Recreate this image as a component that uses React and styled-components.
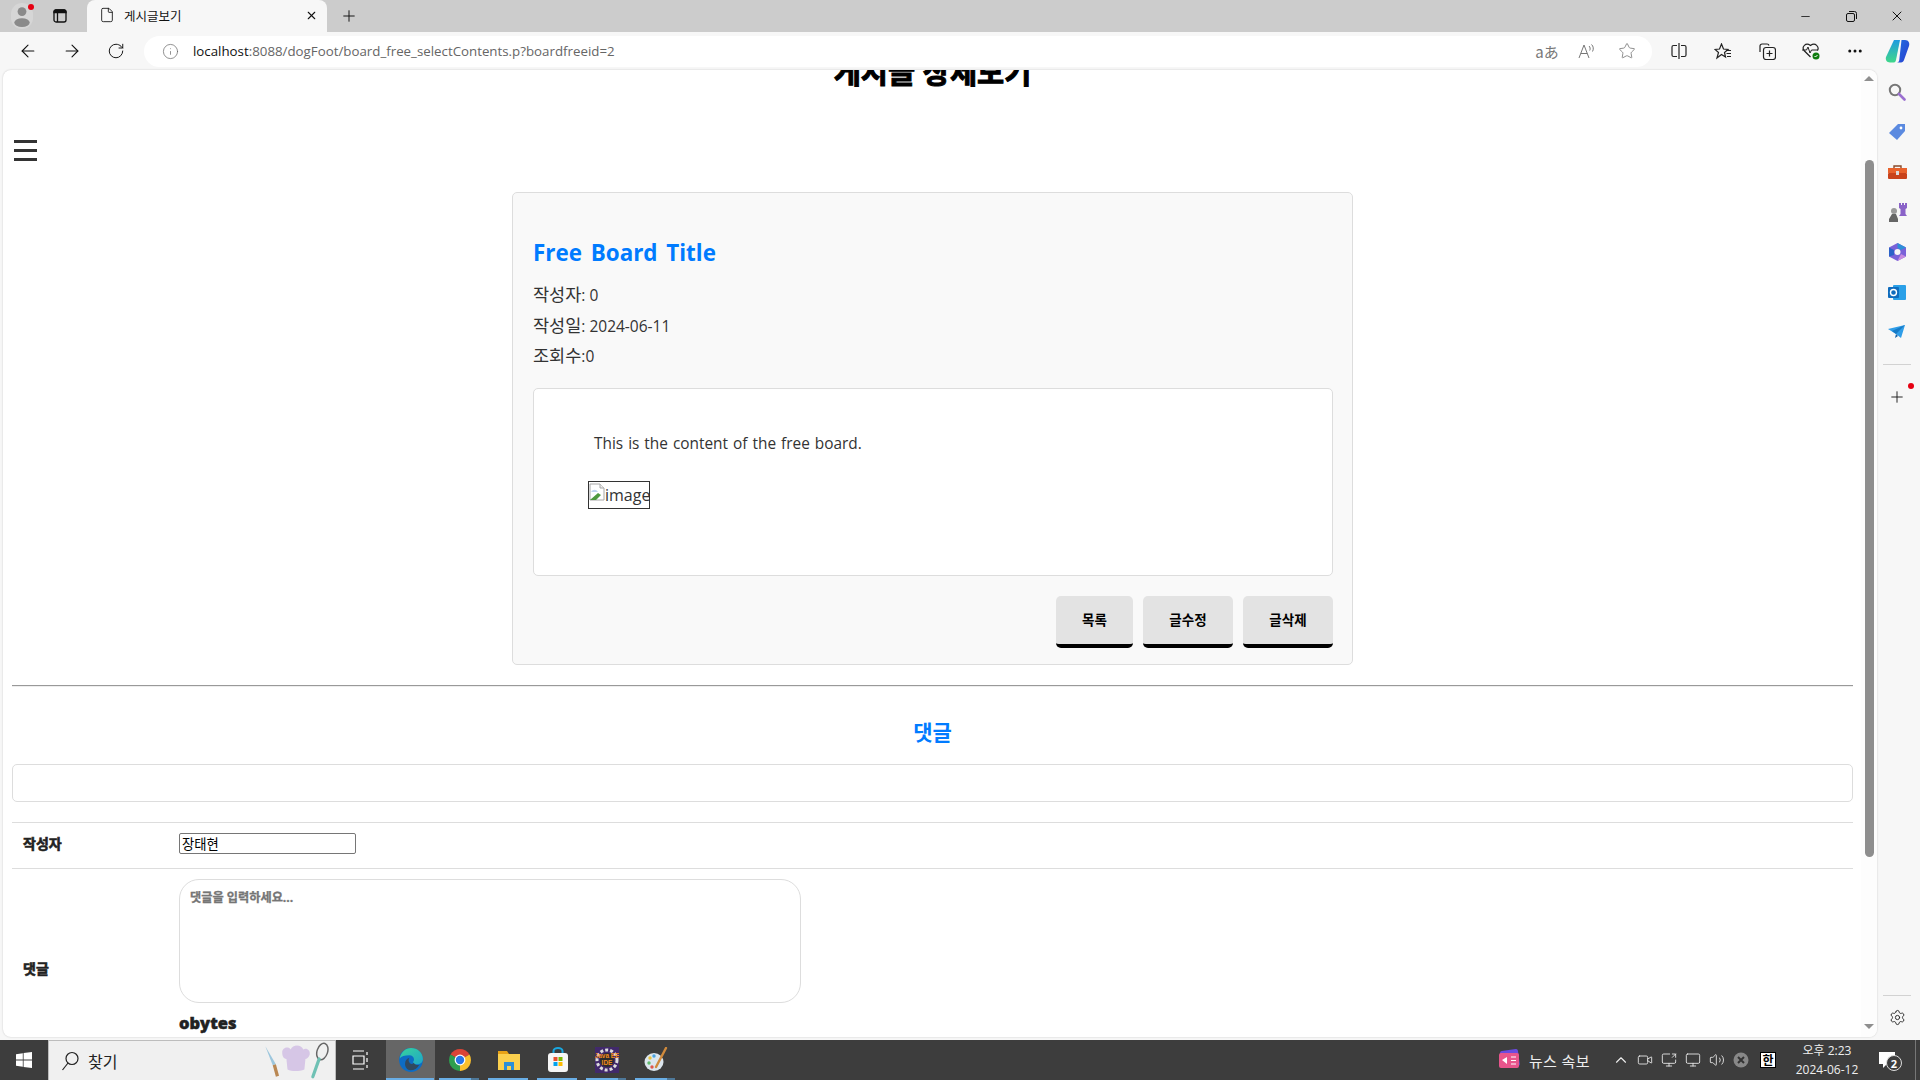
import styled, { createGlobalStyle } from "styled-components";
import {
  ArrowLeft,
  ArrowRight,
  RotateCw,
  Info,
  Star,
  Plus,
  X,
  Minus,
  File,
  Ellipsis,
  Settings,
  ChevronUp,
  Volume2,
  Video,
  ScreenShare,
  Monitor,
} from "lucide-react";

const KR = `"Open Sans", "Noto Sans CJK KR", sans-serif`;

const GlobalStyle = createGlobalStyle`
  html, body {
    margin: 0;
    height: 100%;
    overflow: hidden;
    background: #f7f7f7;
  }
  * {
    box-sizing: border-box;
  }
`;

const Browser = styled.div`
  width: 1920px;
  height: 1080px;
  display: flex;
  flex-direction: column;
  font-family: ${KR};
  color: #222;
`;

const TitleBar = styled.div`
  height: 32px;
  display: flex;
  align-items: stretch;
  background: #cccccc;
`;
const Slot = styled.div`
  position: relative;
  flex: none;
  width: ${(p) => p.$w || 44}px;
  display: flex;
  align-items: center;
  justify-content: center;
  color: ${(p) => p.$color || "#111"};
`;
const Tab = styled.div`
  width: 240px;
  margin-left: 11px;
  display: flex;
  align-items: center;
  padding: 0 1px 2px 12px;
  background: #f7f7f7;
  border-radius: 8px 8px 0 0;
  font-size: 12.5px;
  color: #111;
`;
const TabTitle = styled.span`
  margin-left: 9px;
  flex: 1;
`;
const WindowControls = styled.div`
  margin-left: auto;
  display: flex;
`;
const Avatar = styled.div`
  width: 22px;
  height: 26px;
  border-radius: 11px;
  background: #d6d6d6;
  display: flex;
  align-items: center;
  justify-content: center;
`;
const RedDot = styled.span`
  position: absolute;
  top: ${(p) => p.$top}px;
  left: ${(p) => p.$left}px;
  width: 6px;
  height: 6px;
  border-radius: 50%;
  background: #e60012;
`;

const ToolBar = styled.div`
  height: 38px;
  display: flex;
  align-items: center;
  padding: 0 3px 0 6px;
  background: #f7f7f7;
`;
const AddressBar = styled.div`
  flex: 1;
  height: 31px;
  margin: 0 5px 0 6px;
  padding: 0 5px 0 14px;
  display: flex;
  align-items: center;
  background: #fff;
  border-radius: 16px;
  font-size: 13.3px;
  color: #666;
  font-family: "Open Sans", sans-serif;
`;
const UrlText = styled.span`
  margin-left: 11px;
  flex: 1;
  b {
    font-weight: 400;
    color: #111;
  }
`;
const ReadModeGlyph = styled.span`
  font-size: 15px;
  color: #777;
  font-family: "Noto Sans CJK JP", sans-serif;
`;

const Main = styled.div`
  height: 970px;
  display: flex;
`;
const Viewport = styled.div`
  flex: 1;
  margin: 0 0 3px 3px;
  display: flex;
  overflow: hidden;
  background: #fff;
  border-radius: 8px;
  box-shadow: 0 0 2px rgba(0, 0, 0, 0.2);
`;
const Page = styled.div`
  flex: 1;
  min-width: 0;
  padding: 0 8px 0 9px;
  overflow: hidden;
`;
const PageTitle = styled.h1`
  margin: -18px 0 0;
  height: 40px;
  line-height: 40px;
  text-align: center;
  font-size: 29.5px;
  font-weight: 700;
  color: #000;
  -webkit-text-stroke: 1px #000;
`;
const Hamburger = styled.div`
  margin: 48px 0 0 2px;
  width: 23px;
  height: 21px;
  display: flex;
  flex-direction: column;
  justify-content: space-between;
`;
const HamburgerBar = styled.span`
  height: 3px;
  background: #333;
`;

const Card = styled.section`
  width: 841px;
  height: 473px;
  margin: 31px auto 0;
  padding: 42px 19px 16px 20px;
  background: #f9f9f9;
  border: 1px solid #ddd;
  border-radius: 5px;
`;
const CardTitle = styled.h2`
  margin: 0 0 9px;
  font-size: 22.4px;
  line-height: 36px;
  font-weight: 700;
  color: #007bff;
  word-spacing: 3px;
`;
const Meta = styled.p`
  margin: 0;
  height: 30.5px;
  line-height: 30px;
  font-size: 15.5px;
  color: #333;
`;
const MetaKey = styled.span`
  font-size: 17.5px;
  line-height: 1;
  font-weight: 400;
`;
const ContentBox = styled.div`
  height: 188px;
  margin-top: 16px;
  padding: 43px 54px 0;
  background: #fff;
  border: 1px solid #ddd;
  border-radius: 5px;
`;
const ContentText = styled.p`
  margin: 0;
  padding-left: 6px;
  line-height: 24px;
  font-size: 15.4px;
  color: #333;
  word-spacing: 1px;
`;
const BrokenImage = styled.div`
  width: 62px;
  height: 28px;
  margin-top: 25px;
  display: flex;
  align-items: center;
  overflow: hidden;
  border: 1px solid #333;
  font-size: 16px;
  color: #333;
  white-space: nowrap;
  svg {
    flex: none;
    align-self: flex-start;
    margin-top: 1px;
  }
`;
const ButtonRow = styled.div`
  margin-top: 20px;
  display: flex;
  justify-content: flex-end;
  gap: 10px;
`;
const Button = styled.button`
  width: ${(p) => p.$w}px;
  height: 52px;
  padding: 0 0 1px;
  background: #e3e3e3;
  border: 0;
  border-bottom: 4px solid #000;
  border-radius: 5px;
  font-family: ${KR};
  font-size: 13.5px;
  font-weight: 700;
  color: #000;
`;

const Divider = styled.hr`
  margin: 20px 0 0;
  height: 2px;
  border: 0;
  border-top: 1px solid #999;
  border-bottom: 1px solid #eee;
`;
const ReplyHeading = styled.h3`
  margin: 30px 0 0;
  line-height: 30px;
  text-align: center;
  font-size: 21px;
  font-weight: 700;
  color: #007bff;
`;
const ReplyList = styled.div`
  height: 38px;
  margin-top: 17px;
  border: 1px solid #ddd;
  border-radius: 5px;
`;
const FormRow = styled.div`
  display: grid;
  grid-template-columns: 167px 1fr;
  margin-top: ${(p) => p.$mt || 0}px;
  min-height: ${(p) => p.$h}px;
  padding: 10px 0 0;
  border-top: 1px solid #ddd;
`;
const FormLabel = styled.label`
  padding-left: 11px;
  align-self: ${(p) => p.$align || "start"};
  line-height: 21px;
  font-size: 14px;
  font-weight: 700;
  color: #222;
  -webkit-text-stroke: 0.6px #222;
`;
const WriterInput = styled.input`
  display: block;
  width: 177px;
  height: 21px;
  padding: 1px 2px;
  border: 1px solid #767676;
  border-radius: 2px;
  font-family: ${KR};
  font-size: 13.33px;
  color: #000;
  background: #fff;
`;
const ReplyArea = styled.textarea`
  display: block;
  width: 622px;
  height: 124px;
  padding: 10px;
  border: 1px solid #ddd;
  border-radius: 20px;
  resize: none;
  font-family: ${KR};
  font-size: 12.2px;
  font-weight: 700;
  line-height: 16px;
  &::placeholder {
    color: #757575;
    opacity: 1;
    -webkit-text-stroke: 0.3px #757575;
  }
`;
const UserName = styled.div`
  margin-top: 10px;
  line-height: 20px;
  font-size: 16.5px;
  font-weight: 800;
  color: #222;
  -webkit-text-stroke: 0.5px #222;
`;

const ScrollRail = styled.div`
  flex: none;
  width: 16px;
  padding: 6px 0 8px;
  display: flex;
  flex-direction: column;
  align-items: center;
  background: #fdfdfd;
`;
const ScrollArrow = styled.span`
  width: 0;
  height: 0;
  border-left: 5px solid transparent;
  border-right: 5px solid transparent;
  ${(p) =>
    p.$down
      ? "border-top: 5px solid #8e8e8e; margin-top: auto;"
      : "border-bottom: 5px solid #8e8e8e;"}
`;
const ScrollThumb = styled.span`
  width: 9px;
  height: 697px;
  margin-top: 79px;
  border-radius: 5px;
  background: #8e8e8e;
`;

const SideBar = styled.aside`
  flex: none;
  width: 43px;
  padding: 2px 3px 3px 0;
  display: flex;
  flex-direction: column;
  align-items: center;
`;
const SideItem = styled.div`
  position: relative;
  height: 40px;
  width: 40px;
  margin-top: ${(p) => p.$mt || 0}px;
  display: flex;
  align-items: center;
  justify-content: center;
  flex: none;
  color: #222;
`;
const SideRule = styled.div`
  width: 28px;
  height: 1px;
  margin: ${(p) => p.$margin};
  background: #d2d2d2;
  flex: none;
`;

const TaskBar = styled.footer`
  height: 40px;
  display: flex;
  align-items: stretch;
  background: #3d3d3d;
  color: #fff;
`;
const StartButton = styled.div`
  width: 48px;
  display: flex;
  align-items: center;
  justify-content: center;
`;
const SearchBox = styled.div`
  width: 288px;
  display: flex;
  align-items: center;
  padding: 0 4px 0 12px;
  background: #f0f0f0;
  border: 1px solid #bdbdbd;
  border-bottom: 0;
  color: #222;
  font-size: 16px;
`;
const SearchText = styled.span`
  margin-left: 9px;
  flex: 1;
`;
const TaskView = styled.div`
  width: 50px;
  display: flex;
  align-items: center;
  justify-content: center;
`;
const TaskApp = styled.div`
  position: relative;
  flex: none;
  width: 49px;
  display: flex;
  align-items: center;
  justify-content: center;
  background: ${(p) => (p.$active ? "#666666" : "transparent")};
  &::after {
    content: "";
    position: absolute;
    left: ${(p) => (p.$active ? 0 : 4)}px;
    right: ${(p) => (p.$active ? 1 : 5)}px;
    bottom: 0;
    height: 2px;
    background: ${(p) =>
      p.$stacked
        ? "linear-gradient(90deg, #69aee6 80%, #4e7899 80%)"
        : "#69aee6"};
  }
`;
const Tray = styled.div`
  margin-left: auto;
  display: flex;
  align-items: stretch;
`;
const NewsLabel = styled.span`
  align-self: center;
  margin: 0 19px 0 9px;
  font-size: 15px;
  letter-spacing: 0.4px;
  color: #eee;
`;
const TrayIcon = styled.div`
  width: ${(p) => p.$w || 24}px;
  display: flex;
  align-items: center;
  justify-content: center;
  color: #eee;
`;
const ImeBadge = styled.span`
  width: 16px;
  height: 16px;
  display: flex;
  align-items: center;
  justify-content: center;
  background: #fff;
  border: 1px solid #000;
  color: #000;
  font-size: 12px;
  font-weight: 700;
`;
const Clock = styled.div`
  width: 88px;
  display: flex;
  flex-direction: column;
  align-items: center;
  justify-content: center;
  gap: 1px;
  font-size: 12px;
  line-height: 18px;
  color: #eee;
`;
const NotifyButton = styled.div`
  position: relative;
  width: 34px;
  display: flex;
  align-items: center;
  justify-content: center;
`;
const NotifyCount = styled.span`
  position: absolute;
  left: 15px;
  top: 15px;
  width: 16px;
  height: 16px;
  display: flex;
  align-items: center;
  justify-content: center;
  border: 1px solid #ddd;
  border-radius: 50%;
  background: #3d3d3d;
  font-size: 11px;
  font-weight: 700;
  color: #fff;
`;
const ShowDesktop = styled.div`
  width: 5px;
  margin-left: 10px;
  border-left: 1px solid #777;
`;

const line = { strokeWidth: 1.5 };

const TabActions = () => (
  <svg width="14" height="14" viewBox="0 0 14 14" fill="none" stroke="#111" strokeWidth="1.300">
    <rect x="1" y="1" width="12" height="12" rx="2" />
    <path d="M1 3.500h12V3a2 2 0 0 0-2-2H3a2 2 0 0 0-2 2z" fill="#111" />
    <path d="M4.500 3.500V13" />
  </svg>
);
const Restore = () => (
  <svg width="11" height="11" viewBox="0 0 11 11" fill="none" stroke="#111">
    <rect x="0.500" y="2.500" width="8" height="8" rx="1.500" />
    <path d="M3 .5h5.500a2 2 0 0 1 2 2V8" />
  </svg>
);
const SplitScreen = () => (
  <svg width="16" height="16" viewBox="0 0 16 16" fill="none" stroke="#222" strokeWidth="1.200">
    <path d="M6 2.500H2.500a1.500 1.500 0 0 0-1.500 1.500v8a1.500 1.500 0 0 0 1.500 1.500H6M10 2.500h3.500A1.500 1.500 0 0 1 15 4v8a1.500 1.500 0 0 1-1.500 1.500H10M8 0v16" />
  </svg>
);
const Favorites = () => (
  <svg width="18" height="17" viewBox="0 0 18 17" fill="none" stroke="#222" strokeWidth="1.200">
    <path d="M7.500 1 9.500 6 14 6.400 10.500 9.500 11.500 14 7.500 11.500 3 15 4.500 9.500 1 6.400 5.500 6z" />
    <path d="M12 7.500h5M12.500 10.500h4.500M13 13.500h4" />
  </svg>
);
const Collections = () => (
  <svg width="17" height="17" viewBox="0 0 17 17" fill="none" stroke="#222" strokeWidth="1.200">
    <path d="M1 9V3a2 2 0 0 1 2-2h5a2 2 0 0 1 2 1.500" />
    <rect x="4.500" y="4.500" width="12" height="12" rx="2.500" />
    <path d="M10.500 7.500v6M7.500 10.500h6" />
  </svg>
);
const BrowserHealth = () => (
  <svg width="18" height="18" viewBox="0 0 18 18" fill="none">
    <path d="M8.500 15 2 8.500C-.5 5 3.500 0 8.500 3.500 13.500 0 17.500 5 15.500 8.500" stroke="#222" strokeWidth="1.200" />
    <path d="M0 8h4.500l1.500-3 2 6 1.500-3H16" stroke="#222" strokeWidth="1" />
    <circle cx="14" cy="14" r="3.500" fill="#107c10" />
    <path d="M12.500 14l1 1 2-2" stroke="#fff" />
  </svg>
);
const SideSearch = () => (
  <svg width="18" height="18" viewBox="0 0 18 18" fill="none">
    <circle cx="7" cy="7" r="5.200" stroke="#777" strokeWidth="2" />
    <path d="M11 11 16.500 16.500" stroke="#9b6fd0" strokeWidth="2.600" strokeLinecap="round" />
  </svg>
);
const TaskSearch = () => (
  <svg width="18" height="20" viewBox="0 0 18 20" fill="none" stroke="#222" strokeWidth="1.200">
    <circle cx="11" cy="7.500" r="6" />
    <path d="M7 12 1.500 19" />
  </svg>
);
const WinLogo = () => (
  <svg width="16" height="16" viewBox="0 0 16 16" fill="#fff">
    <path d="M0 2.200 6.800 1.200V7.600H0zM7.600 1.100 16 0V7.600H7.600zM0 8.400H6.800V14.800L0 13.800zM7.600 8.400H16V16L7.600 14.900z" />
  </svg>
);
const Chrome = () => (
  <svg width="24" height="24" viewBox="0 0 24 24">
    <path d="M12 12 2.500 6.500A11 11 0 0 1 21.500 6.500z" fill="#db4437" />
    <path d="M12 12 21.500 6.500A11 11 0 0 1 12 23z" fill="#fbc02d" />
    <path d="M12 12V23A11 11 0 0 1 2.500 6.500z" fill="#2e9e4f" />
    <circle cx="12" cy="12" r="5.400" fill="#fff" />
    <circle cx="12" cy="12" r="4.200" fill="#2a75e8" />
  </svg>
);
const Edge = ({ id }) => (
  <svg width="26" height="26" viewBox="0 0 24 24">
    <defs>
      <linearGradient id={id} x1="0" y1="0" x2="1" y2="1">
        <stop offset="0" stopColor="#38d39a" />
        <stop offset="1" stopColor="#1fa6c9" />
      </linearGradient>
    </defs>
    <circle cx="12" cy="12" r="11" fill="#0d6cc4" />
    <path
      d="M1.500 10.500C3 4.500 7 1 12 1c6 0 11 4.500 11 10 0 3-2.500 5-5.500 5-2 0-3.500-.7-3.500-2 0-.8.8-1.200.8-2.500C14.800 9 13 7.500 10.500 7.500 6 7.500 3 8.500 1.500 10.500z"
      fill={`url(#${id})`}
    />
    <path
      d="M14.500 14.500c1 2 3 2.500 5 2-1.500 3-4.500 5-8 5-3 0-5-3-5-6 0-3 2-5 4-5.500-1 1.500-1 3.500.5 5 1 .9 2.500 1 3.500-.5z"
      fill="#3d3d3d"
      opacity="0.75"
    />
  </svg>
);
const Explorer = () => (
  <svg width="24" height="24" viewBox="0 0 24 24">
    <path d="M1 3h9l2 3H1z" fill="#e8a317" />
    <rect x="1" y="6" width="22" height="16" fill="#fbd04e" />
    <path d="M7 22v-8h10v8h-3v-4h-4v4z" fill="#2b8fd8" />
  </svg>
);
const Store = () => (
  <svg width="24" height="26" viewBox="0 0 24 26">
    <path d="M7.500 7V4a4.500 3 0 0 1 9 0v3" fill="none" stroke="#19a7e0" strokeWidth="2" />
    <rect x="2" y="6" width="20" height="19" rx="3" fill="#f6f6f6" />
    <rect x="7.500" y="10" width="4" height="4" fill="#e8502f" />
    <rect x="12.500" y="10" width="4" height="4" fill="#7db700" />
    <rect x="7.500" y="15" width="4" height="4" fill="#00a2ee" />
    <rect x="12.500" y="15" width="4" height="4" fill="#fdb900" />
  </svg>
);
const JavaIde = () => (
  <svg width="24" height="26" viewBox="0 0 24 26">
    <rect width="24" height="26" fill="#41296b" />
    <circle cx="12" cy="13" r="10" fill="none" stroke="#ddd" strokeWidth="3" strokeDasharray="3 2" />
    <circle cx="12" cy="13" r="7" fill="#2c2c2c" />
    <text x="12" y="11" textAnchor="middle" fontSize="6.500" fontWeight="700" fill="#f08a1d" fontFamily="Liberation Sans, sans-serif">Java EE</text>
    <text x="12" y="18" textAnchor="middle" fontSize="6.500" fontWeight="700" fill="#f08a1d" fontFamily="Liberation Sans, sans-serif">IDE</text>
  </svg>
);
const Palette = () => (
  <svg width="26" height="26" viewBox="0 0 26 26">
    <ellipse cx="11" cy="15" rx="9.500" ry="9" fill="#dce6ee" />
    <circle cx="7" cy="11" r="1.700" fill="#e8c33c" />
    <circle cx="11" cy="9" r="1.700" fill="#4aa3df" />
    <circle cx="6" cy="16" r="1.700" fill="#5fba6c" />
    <circle cx="9" cy="20" r="1.700" fill="#e0574c" />
    <path d="M23 1 13 20" stroke="#d08a3c" strokeWidth="2.400" strokeLinecap="round" />
  </svg>
);
const ChefDoodle = () => (
  <svg width="68" height="38" viewBox="0 0 64 36">
    <path d="M2 4 9 22l3-1z" fill="#9cc6dd" />
    <path d="M9 22l3-1 3 11-3 1z" fill="#b98752" />
    <path
      d="M18 10c0-5 6-6 8-3 2-5 10-5 12 0 3-2 7 1 6 5-1 3-3 4-4 4l-1 10c-5 2-12 2-16 0l-1-10c-3 0-4-3-4-6z"
      fill="#d6c6e6"
    />
    <ellipse cx="56" cy="9" rx="5" ry="8" fill="none" stroke="#666" strokeWidth="1.400" transform="rotate(18 56 9)" />
    <path d="M53 16 47 33" stroke="#6fc1b4" strokeWidth="3" strokeLinecap="round" />
  </svg>
);
const TaskViewIcon = () => (
  <svg width="18" height="20" viewBox="0 0 18 20" fill="none" stroke="#fff" strokeWidth="1.200">
    <path d="M1 1h11M1 19h11M1 6h11v8H1zM15 2v3M15 8v4M15 15v3" />
  </svg>
);
const NewsIcon = () => (
  <svg width="22" height="22" viewBox="0 0 22 22">
    <rect x="3" y="1" width="18" height="17" rx="2" fill="#6a4be0" transform="rotate(-8 12 10)" />
    <rect x="1" y="4" width="20" height="15" rx="2" fill="#e8558c" />
    <path d="M4 11l5-3v7z" fill="#fff" />
    <path d="M13 8h5M13 11.500h5M13 15h5" stroke="#fff" strokeWidth="1.200" />
  </svg>
);
const BlockedIcon = () => (
  <svg width="16" height="16" viewBox="0 0 16 16">
    <circle cx="8" cy="8" r="7.500" fill="#888" />
    <path d="M5 5l6 6M11 5l-6 6" stroke="#333" strokeWidth="2" />
  </svg>
);
const NotifyIcon = () => (
  <svg width="18" height="16" viewBox="0 0 18 16" fill="#fff">
    <path d="M0 0h16v12H8l-4 4v-4H0z" />
  </svg>
);
const BrokenPic = () => (
  <svg width="16" height="18" viewBox="0 0 16 18">
    <path d="M1 1h10l4 4v12H1z" fill="#fff" stroke="#a8a8a8" />
    <path d="M11 1v4h4" fill="#eee" stroke="#a8a8a8" />
    <path d="M2 9c2-3 5-3 7 0z" fill="#bcd2ee" />
    <path d="M1 17 9 10l3 2-5 5z" fill="#4f9a3f" />
  </svg>
);
const Copilot = () => (
  <svg width="25" height="24" viewBox="0 0 25 24">
    <defs>
      <linearGradient id="copA" x1="0" y1="0" x2="0" y2="1">
        <stop offset="0" stopColor="#1e9be0" />
        <stop offset="1" stopColor="#3fd88a" />
      </linearGradient>
      <linearGradient id="copB" x1="0" y1="0" x2="1" y2="1">
        <stop offset="0" stopColor="#1f6fe0" />
        <stop offset="1" stopColor="#2b3fd0" />
      </linearGradient>
    </defs>
    <path d="M9 1h6L11 21c-.3 1.500-1 2.500-2 2.500H5C1.500 23.500.2 20.500 1 18z" fill="url(#copA)" />
    <path d="M16.500 1h3.500c3.500 0 5 3 4 6l-5 14c-.5 1.500-1.500 2.500-3 2.500h-4c1 0 1.800-.7 2.200-2z" fill="url(#copB)" />
  </svg>
);
const Tag = () => (
  <svg width="18" height="18" viewBox="0 0 18 18">
    <path d="M10 1h7v7l-8 9-8-7z" fill="#5b8ae0" />
    <circle cx="13" cy="5" r="1.400" fill="#fff" />
  </svg>
);
const Toolbox = () => (
  <svg width="19" height="15" viewBox="0 0 19 15">
    <path d="M6 3V1h7v2" fill="none" stroke="#8a4a2a" strokeWidth="1.400" />
    <rect y="3" width="19" height="5" fill="#e8622c" />
    <rect y="8" width="19" height="6" rx="1" fill="#c9431b" />
    <rect x="8" y="6" width="3" height="4" fill="#ddd" />
  </svg>
);
const Chess = () => (
  <svg width="19" height="19" viewBox="0 0 19 19">
    <path d="M11 0h2v2h1V0h2v2h1V0h2v5l-1.500 1v5l1.500 2H11l1.500-2V6L11 5z" fill="#8a63c8" />
    <circle cx="6" cy="8" r="3" fill="#9a9a9a" />
    <path d="M4 11h4l2 5v3H1v-3z" fill="#666" />
  </svg>
);
const M365 = () => (
  <svg width="17" height="18" viewBox="0 0 17 18">
    <path d="M8.500 0 17 4.500v9L8.500 18 0 13.500v-9z" fill="#7a62d8" />
    <path d="M8.500 0 17 4.500 12 7 8.500 5z" fill="#2d8fd8" />
    <path d="M0 4.500 5 7v5l-5 1.500z" fill="#2b62c8" />
    <path d="M8.500 18 17 13.500 12 11z" fill="#c68be0" />
    <circle cx="8.500" cy="9" r="3" fill="#f7f7f7" />
  </svg>
);
const Outlook = () => (
  <svg width="18" height="17" viewBox="0 0 18 17">
    <rect x="5" y="1" width="13" height="15" rx="1" fill="#2aa0e8" />
    <rect y="3" width="11" height="11" rx="1" fill="#0f6cbd" />
    <circle cx="5.500" cy="8.500" r="3" fill="none" stroke="#fff" strokeWidth="1.400" />
  </svg>
);
const Send = () => (
  <svg width="18" height="14" viewBox="0 0 18 14">
    <path d="M0 4 17 0 13 13 8 9z" fill="#2f9de8" />
    <path d="M8 9l-1 4 3-2z" fill="#0f5ea8" />
    <path d="M4 6 17 0 8 9z" fill="#167ac6" />
  </svg>
);

const sideIcons = [
  <SideSearch key="s" />,
  <Tag key="t" />,
  <Toolbox key="b" />,
  <Chess key="c" />,
  <M365 key="m" />,
  <Outlook key="o" />,
  <Send key="p" />,
];

export default function App() {
  return (
    <Browser>
      <GlobalStyle />
      <TitleBar>
        <Slot>
          <Avatar>
            <svg width="16" height="22" viewBox="0 0 14 20" fill="#8a8a8a">
              <circle cx="7" cy="6" r="4" />
              <ellipse cx="7" cy="16" rx="7" ry="4" />
            </svg>
          </Avatar>
          <RedDot $top={4} $left={28} />
        </Slot>
        <Slot $w={32}>
          <TabActions />
        </Slot>
        <Tab>
          <File size={16} strokeWidth={1.3} />
          <TabTitle>게시글보기</TabTitle>
          <Slot $w={30}>
            <X size={13} />
          </Slot>
        </Tab>
        <Slot>
          <Plus size={18} strokeWidth={1.3} />
        </Slot>
        <WindowControls>
          <Slot $w={46}>
            <Minus size={13} {...line} />
          </Slot>
          <Slot $w={46}>
            <Restore />
          </Slot>
          <Slot $w={46}>
            <X size={16} {...line} />
          </Slot>
        </WindowControls>
      </TitleBar>

      <ToolBar>
        <Slot>
          <ArrowLeft size={20} strokeWidth={1.3} />
        </Slot>
        <Slot>
          <ArrowRight size={20} strokeWidth={1.3} />
        </Slot>
        <Slot>
          <RotateCw size={18} strokeWidth={1.3} />
        </Slot>
        <AddressBar>
          <Slot $w={24} $color="#666">
            <Info size={17} strokeWidth={1} />
          </Slot>
          <UrlText>
            <b>localhost</b>:8088/dogFoot/board_free_selectContents.p?boardfreeid=2
          </UrlText>
          <Slot $w={40}>
            <ReadModeGlyph>aあ</ReadModeGlyph>
          </Slot>
          <Slot $w={40} $color="#777">
            <svg width="18" height="16" viewBox="0 0 18 16" fill="none" stroke="currentColor" strokeWidth="1">
              <path d="M1 15 6 2l5 13M2.800 10.500h6.400M11 3c1.200 1 1.500 3 .7 4.500M13.500 1.500c2 1.500 2.300 5 1 7" />
            </svg>
          </Slot>
          <Slot $w={40} $color="#777">
            <Star size={18} strokeWidth={1.1} />
          </Slot>
        </AddressBar>
        <Slot>
          <SplitScreen />
        </Slot>
        <Slot>
          <Favorites />
        </Slot>
        <Slot>
          <Collections />
        </Slot>
        <Slot>
          <BrowserHealth />
        </Slot>
        <Slot>
          <Ellipsis size={18} />
        </Slot>
        <Slot $w={40}>
          <Copilot />
        </Slot>
      </ToolBar>

      <Main>
        <Viewport>
          <Page>
            <PageTitle>게시글 상세보기</PageTitle>
            <Hamburger>
              <HamburgerBar />
              <HamburgerBar />
              <HamburgerBar />
            </Hamburger>
            <Card>
              <CardTitle>Free Board Title</CardTitle>
              <Meta>
                <MetaKey>작성자</MetaKey>: 0
              </Meta>
              <Meta>
                <MetaKey>작성일</MetaKey>: 2024-06-11
              </Meta>
              <Meta>
                <MetaKey>조회수</MetaKey>:0
              </Meta>
              <ContentBox>
                <ContentText>This is the content of the free board.</ContentText>
                <BrokenImage>
                  <BrokenPic />
                  image
                </BrokenImage>
              </ContentBox>
              <ButtonRow>
                <Button $w={77}>목록</Button>
                <Button $w={90}>글수정</Button>
                <Button $w={90}>글삭제</Button>
              </ButtonRow>
            </Card>
            <Divider />
            <ReplyHeading>댓글</ReplyHeading>
            <ReplyList />
            <FormRow $mt={20} $h={46}>
              <FormLabel>작성자</FormLabel>
              <WriterInput defaultValue="장태현" />
            </FormRow>
            <FormRow $h={190}>
              <FormLabel $align="center">댓글</FormLabel>
              <div>
                <ReplyArea placeholder="댓글을 입력하세요..." />
                <UserName>obytes</UserName>
              </div>
            </FormRow>
          </Page>
          <ScrollRail>
            <ScrollArrow />
            <ScrollThumb />
            <ScrollArrow $down />
          </ScrollRail>
        </Viewport>
        <SideBar>
          {sideIcons.map((icon) => (
            <SideItem key={icon.key}>{icon}</SideItem>
          ))}
          <SideRule $margin="12px 0 0" />
          <SideItem $mt={12}>
            <Plus size={18} strokeWidth={1.3} />
            <RedDot $top={6} $left={31} />
          </SideItem>
          <SideRule $margin="auto 0 1px" />
          <SideItem>
            <Settings size={17} strokeWidth={1.3} />
          </SideItem>
        </SideBar>
      </Main>

      <TaskBar>
        <StartButton>
          <WinLogo />
        </StartButton>
        <SearchBox>
          <TaskSearch />
          <SearchText>찾기</SearchText>
          <ChefDoodle />
        </SearchBox>
        <TaskView>
          <TaskViewIcon />
        </TaskView>
        <TaskApp $active>
          <Edge id="edgeGrad" />
        </TaskApp>
        <TaskApp $stacked>
          <Chrome />
        </TaskApp>
        <TaskApp>
          <Explorer />
        </TaskApp>
        <TaskApp>
          <Store />
        </TaskApp>
        <TaskApp $stacked>
          <JavaIde />
        </TaskApp>
        <TaskApp $stacked>
          <Palette />
        </TaskApp>
        <Tray>
          <TrayIcon $w={22}>
            <NewsIcon />
          </TrayIcon>
          <NewsLabel>뉴스 속보</NewsLabel>
          <TrayIcon>
            <ChevronUp size={18} {...line} />
          </TrayIcon>
          <TrayIcon>
            <Video size={16} strokeWidth={1.3} />
          </TrayIcon>
          <TrayIcon>
            <ScreenShare size={16} strokeWidth={1.3} />
          </TrayIcon>
          <TrayIcon>
            <Monitor size={16} strokeWidth={1.3} />
          </TrayIcon>
          <TrayIcon>
            <Volume2 size={16} strokeWidth={1.3} />
          </TrayIcon>
          <TrayIcon>
            <BlockedIcon />
          </TrayIcon>
          <TrayIcon $w={30}>
            <ImeBadge>한</ImeBadge>
          </TrayIcon>
          <Clock>
            <span>오후 2:23</span>
            <span>2024-06-12</span>
          </Clock>
          <NotifyButton>
            <NotifyIcon />
            <NotifyCount>2</NotifyCount>
          </NotifyButton>
          <ShowDesktop />
        </Tray>
      </TaskBar>
    </Browser>
  );
}
